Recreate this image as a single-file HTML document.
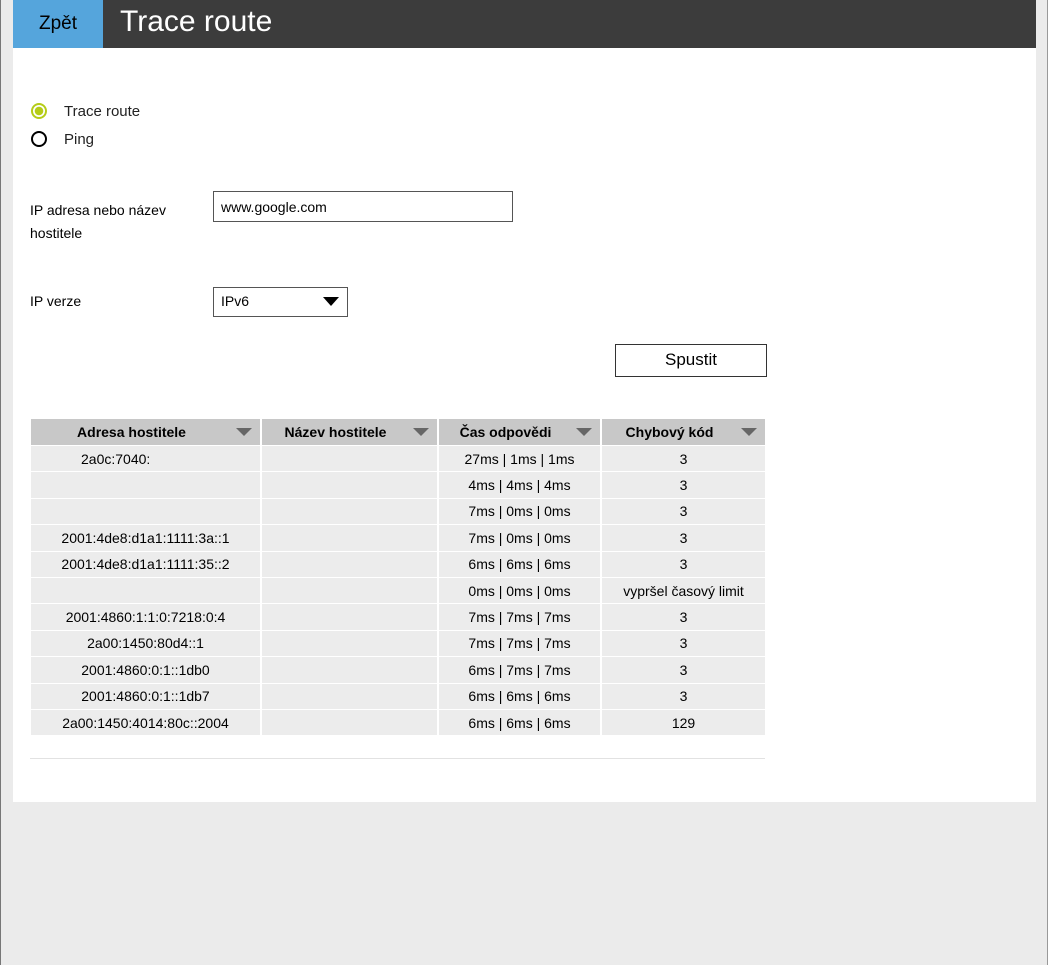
<!DOCTYPE html>
<html><head><style>
body{margin:0;width:1048px;height:965px;background:#ebebeb;font-family:"Liberation Sans",Arial,sans-serif;position:relative;overflow:hidden}
.l{position:absolute;left:0;top:0;width:1px;height:965px;background:#777}
.r{position:absolute;right:0;top:0;width:1px;height:965px;background:#999}
.hdr{position:absolute;left:13px;top:0;width:1023px;height:48px;background:#3c3c3c}
.back{position:absolute;left:0;top:0;width:90px;height:48px;background:#55a5dc;color:#000;font-size:19px;line-height:48px;text-align:center}
.title{position:absolute;left:107px;top:0;line-height:44px;color:#fff;font-size:30px}
.panel{position:absolute;left:13px;top:48px;width:1023px;height:754px;background:#fff}
.a{position:absolute;font-size:15px;color:#222}
.rad{position:absolute;width:16px;height:16px;border-radius:50%;box-sizing:border-box}
table{position:absolute;left:31px;top:419px;border-collapse:collapse;font-size:14px}
th{background:#c8c8c8;height:26px;padding:0 28px 0 0;font-size:14px;position:relative;border-right:2px solid #fff}
td{background:#ececec;height:25.4px;padding:0;text-align:center;border-right:2px solid #fff;border-top:1px solid #fff}
th:last-child,td:last-child{border-right:0}
.tri{position:absolute;right:8px;top:9px;width:0;height:0;border-left:8px solid transparent;border-right:8px solid transparent;border-top:8px solid #666}
</style></head><body>
<div class="l"></div><div class="r"></div>
<div class="hdr"><div class="back">Zpět</div><div class="title">Trace route</div></div>
<div class="panel"></div>
<div class="rad" style="left:31px;top:103px;border:2px solid #b5cc18;background:radial-gradient(#b5cc18 4px,#fff 4.5px)"></div>
<div class="a" style="left:64px;top:103px">Trace route</div>
<div class="rad" style="left:31px;top:131px;border:2px solid #000"></div>
<div class="a" style="left:64px;top:131px">Ping</div>
<div class="a" style="left:30px;top:199px;font-size:14px;line-height:23px;color:#000">IP adresa nebo název<br>hostitele</div>
<div style="position:absolute;left:213px;top:191px;width:298px;height:29px;border:1px solid #555;font-size:14px;line-height:30px;text-indent:7px;box-sizing:content-box">www.google.com</div>
<div class="a" style="left:30px;top:293px;font-size:14px;color:#000">IP verze</div>
<div style="position:absolute;left:213px;top:287px;width:133px;height:28px;border:1px solid #555;font-size:14px;line-height:26px;text-indent:7px">IPv6<div style="position:absolute;right:8px;top:9px;border-left:8px solid transparent;border-right:8px solid transparent;border-top:9px solid #000"></div></div>
<div style="position:absolute;left:615px;top:344px;width:150px;height:31px;border:1px solid #333;font-size:17px;line-height:30px;text-align:center">Spustit</div>
<table>
<tr><th style="width:201px">Adresa hostitele<span class="tri"></span></th><th style="width:147px">Název hostitele<span class="tri"></span></th><th style="width:133px">Čas odpovědi<span class="tri"></span></th><th style="width:135px">Chybový kód<span class="tri"></span></th></tr>
<tr><td style="text-align:left;padding-left:50px">2a0c:7040:</td><td></td><td>27ms | 1ms | 1ms</td><td>3</td></tr>
<tr><td></td><td></td><td>4ms | 4ms | 4ms</td><td>3</td></tr>
<tr><td></td><td></td><td>7ms | 0ms | 0ms</td><td>3</td></tr>
<tr><td>2001:4de8:d1a1:1111:3a::1</td><td></td><td>7ms | 0ms | 0ms</td><td>3</td></tr>
<tr><td>2001:4de8:d1a1:1111:35::2</td><td></td><td>6ms | 6ms | 6ms</td><td>3</td></tr>
<tr><td></td><td></td><td>0ms | 0ms | 0ms</td><td>vypršel časový limit</td></tr>
<tr><td>2001:4860:1:1:0:7218:0:4</td><td></td><td>7ms | 7ms | 7ms</td><td>3</td></tr>
<tr><td>2a00:1450:80d4::1</td><td></td><td>7ms | 7ms | 7ms</td><td>3</td></tr>
<tr><td>2001:4860:0:1::1db0</td><td></td><td>6ms | 7ms | 7ms</td><td>3</td></tr>
<tr><td>2001:4860:0:1::1db7</td><td></td><td>6ms | 6ms | 6ms</td><td>3</td></tr>
<tr><td>2a00:1450:4014:80c::2004</td><td></td><td>6ms | 6ms | 6ms</td><td>129</td></tr>
</table>
<div style="position:absolute;left:30px;top:758px;width:735px;height:1px;background:#e2e2e2"></div>
</body></html>
